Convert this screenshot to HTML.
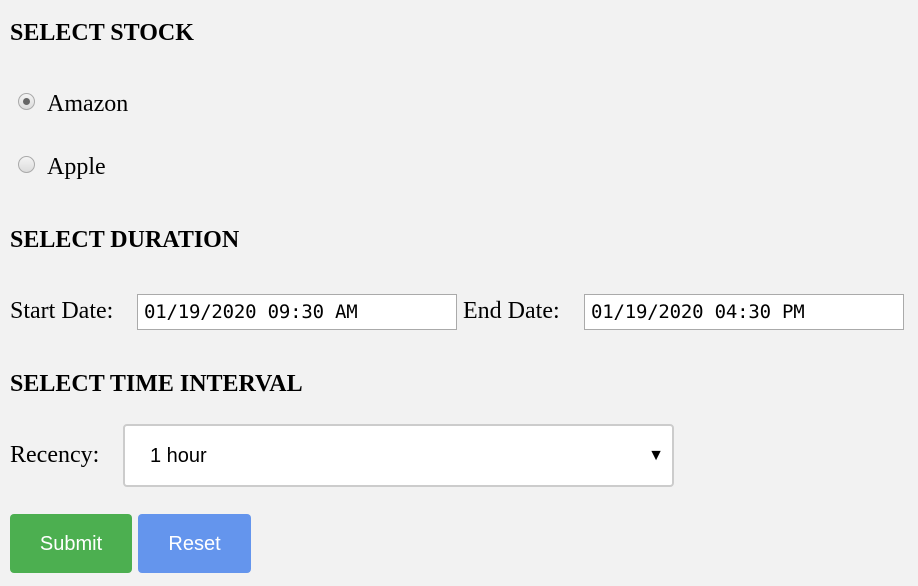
<!DOCTYPE html>
<html><head><meta charset="utf-8"><style>
body{margin:0;width:918px;height:586px;background:#f2f2f2;font-family:"Liberation Serif",serif;color:#000;position:relative;overflow:hidden}
.a{position:absolute;white-space:nowrap}
h{position:absolute;font-weight:bold;font-size:24px;left:10px;line-height:26px}
.l{font-size:24px;line-height:28px}
.radio{position:absolute;width:17px;height:17px;border-radius:50%;border:1px solid #aaa;background:linear-gradient(#f4f4f4,#dcdcdc);box-sizing:border-box}
.dot{position:absolute;left:4px;top:4px;width:7px;height:7px;border-radius:50%;background:#666}
.in{position:absolute;height:36px;background:#fff;border:1px solid #aaa;box-sizing:border-box;font-family:"DejaVu Sans Mono","Liberation Mono",monospace;font-size:19px;line-height:34px;padding-left:6px;letter-spacing:-0.2px}
.btn{position:absolute;top:514px;height:59px;border-radius:4px;color:#fff;font-family:"Liberation Sans",sans-serif;font-size:20px;line-height:60px;text-align:center}
</style></head><body>
<h style="top:20px">SELECT STOCK</h>
<div class="radio" style="left:18px;top:93px"><div class="dot"></div></div>
<div class="a l" style="left:47px;top:90px">Amazon</div>
<div class="radio" style="left:18px;top:156px"></div>
<div class="a l" style="left:47px;top:153px">Apple</div>
<h style="top:227px">SELECT DURATION</h>
<div class="a l" style="left:10px;top:297px">Start Date:</div>
<div class="in" style="left:137px;top:294px;width:320px">01/19/2020 09:30 AM</div>
<div class="a l" style="left:463px;top:297px">End Date:</div>
<div class="in" style="left:584px;top:294px;width:320px">01/19/2020 04:30 PM</div>
<h style="top:371px">SELECT TIME INTERVAL</h>
<div class="a l" style="left:10px;top:441px">Recency:</div>
<div class="a" style="left:123px;top:424px;width:551px;height:63px;background:#fff;border:2px solid #ccc;border-radius:4px;box-sizing:border-box;font-family:'Liberation Sans',sans-serif;font-size:20px;line-height:60px;padding-left:25px">1 hour<span style="position:absolute;right:8px;top:0;font-size:16px">▼</span></div>
<div class="btn" style="left:10px;width:122px;background:#4caf50">Submit</div>
<div class="btn" style="left:138px;width:113px;background:#6495ed">Reset</div>
</body></html>
